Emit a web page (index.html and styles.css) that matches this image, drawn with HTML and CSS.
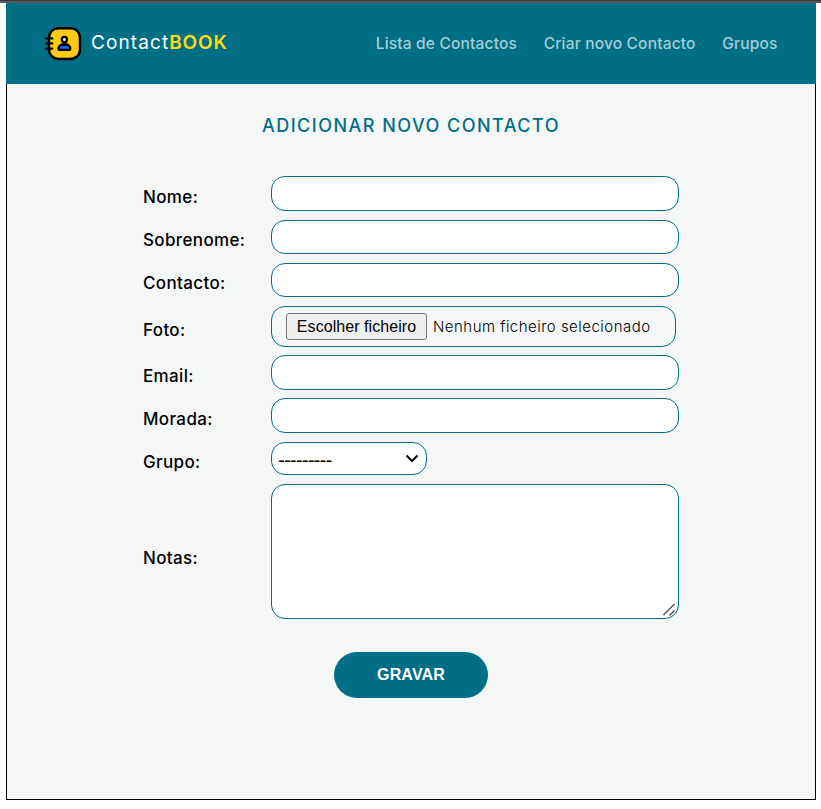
FILE: index.html
```html
<!DOCTYPE html>
<html lang="pt">
<head>
<meta charset="utf-8">
<title>ContactBOOK</title>
<link rel="stylesheet" href="styles.css">
</head>
<body>
<div class="page">
  <header class="header">
    <a class="brand">
      <svg class="logo" width="37" height="34" viewBox="0 0 37 34" fill="none" stroke="#000" stroke-linecap="round">
        <rect x="4" y="1.2" width="31" height="30.8" rx="9.500" fill="#ffca13" stroke-width="2.400"/>
        <path d="M1.400 11.400h5.800M1.400 16.400h5.800M1.400 21.600h5.800" stroke-width="2.400"/>
        <path d="M13.400 22c0-3.200 2.600-5.300 6-5.300s6 2.100 6 5.300c0 .8-.4 1-1 1h-10c-.6 0-1-.2-1-1z" fill="#000" stroke-width="2"/>
        <path d="M14.400 21.800c.2-1.400 1-2.200 2-2.800h6c1 .6 1.800 1.400 2 2.800z" fill="#0b6cf0" stroke="none"/>
        <circle cx="19.400" cy="12.500" r="2.600" fill="#fff" stroke-width="2.200"/>
      </svg>
      <span class="name">Contact<b>BOOK</b></span>
    </a>
    <nav class="nav"><a>Lista de Contactos</a><a>Criar novo Contacto</a><a>Grupos</a></nav>
  </header>
  <main class="main">
    <h1 class="title">ADICIONAR NOVO CONTACTO</h1>
    <form class="form">
      <label for="nome">Nome:</label><input class="field" id="nome" type="text">
      <label for="sobrenome" class="raised">Sobrenome:</label><input class="field short" id="sobrenome" type="text">
      <label for="contacto" class="raised">Contacto:</label><input class="field short" id="contacto" type="text">
      <label for="foto">Foto:</label>
      <div class="file"><button id="foto" type="button">Escolher ficheiro</button><span>Nenhum ficheiro selecionado</span></div>
      <label for="email">Email:</label><input class="field" id="email" type="email">
      <label for="morada">Morada:</label><input class="field" id="morada" type="text">
      <label for="grupo">Grupo:</label>
      <div class="select" id="grupo"><span>---------</span>
        <svg width="14" height="9" viewBox="0 0 14 9" fill="none" stroke="#000" stroke-width="2"><path d="M1.500 1.500 7 7l5.500-5.500"/></svg>
      </div>
      <label for="notas" class="notes">Notas:</label><div class="notes-box"><textarea class="field" id="notas"></textarea>
        <svg class="grip" width="14" height="14" viewBox="0 0 14 14" stroke="#555" stroke-width="1.500"><path d="M1.500 12 12.500 1M7.500 12.500l5-5"/></svg>
      </div>
    </form>
    <button class="save" type="button">GRAVAR</button>
  </main>
</div>
</body>
</html>
```
FILE: styles.css
```css
* { box-sizing: border-box; }
html { background: #fff; }
body {
  margin: 0;
  height: 809px;
  border-top: 3px solid #5c5858;
  font-family: Inter, "Liberation Sans", sans-serif;
  overflow: hidden;
}
body::before { content: ""; position: absolute; top: 0; left: 0; right: 0; height: 1px; background: #373535; }
.page { width: 810px; height: 797px; margin-left: 6px; display: flex; flex-direction: column; }
.header {
  height: 81px;
  background: #006e85;
  display: flex;
  align-items: center;
  justify-content: space-between;
  padding: 0 38.500px 0 39px;
}
.brand { display: flex; align-items: center; color: #fff; }
.logo { display: block; margin-right: 9px; }
.name { font-size: 19px; line-height: 24px; letter-spacing: 1.100px; white-space: nowrap; margin-top: -2px; }
.name b { color: #ffdb0a; font-weight: 600; letter-spacing: 0.800px; }
.nav { display: flex; gap: 26.600px; font-size: 15.500px; font-weight: 500; color: #a5cdd5; white-space: nowrap; letter-spacing: 0.180px; }
.main { flex: 1; background: #f5f7f7; border: 1px solid #000; border-top: 0; padding: 30px 0 0 136px; }
.title { margin: 0 0 0 -136px; height: 24px; text-align: center; color: #006e85; font-size: 18px; font-weight: 500; line-height: 24px; letter-spacing: 1.480px; }
.form {
  display: grid;
  grid-template-columns: 128px 408px;
  grid-template-rows: 44px 43px 43px 49px 43px 44px 42px 135px;
  margin-top: 38px;
}
label { align-self: center; font-size: 17px; font-weight: 500; line-height: 22px; letter-spacing: 0.360px; padding-bottom: 2px; color: #000; }
.raised { padding-bottom: 4px; }
.notes { padding: 12px 0 0; }
.field { display: block; width: 408px; height: 35px; margin: 0; border: 1px solid #006e85; border-radius: 14px; background: #fff; padding: 6px 14px; outline: 0; }
.short { height: 34px; }
.file { width: 405px; height: 41px; border: 1px solid #006e85; border-radius: 14px; padding: 0 14px; display: flex; align-items: center; gap: 6px; }
.file button { width: 141px; height: 27px; padding: 0; border: 1px solid #767676; border-radius: 3px; background: #efefef; color: #000; font: 16px "Liberation Sans", Arial, sans-serif; letter-spacing: 0.060px; white-space: nowrap; }
.file span { font-size: 15px; font-weight: 300; letter-spacing: 0.480px; white-space: nowrap; color: #000; }
.select { width: 156px; height: 33px; border: 1px solid #006e85; border-radius: 14px; background: #fff; display: flex; align-items: center; justify-content: space-between; padding: 0 7px 0 6px; font: 600 15px Inter, sans-serif; }
.select span { letter-spacing: -1.050px; padding-top: 3px; }
.notes-box { position: relative; height: 135px; }
textarea.field { height: 135px; resize: none; }
.grip { position: absolute; right: 3px; bottom: 2px; }
.save { display: block; width: 154px; height: 46px; margin: 33px 0 0 191px; padding: 0; border: 0; border-radius: 23px; background: #006e85; color: #fff; font: bold 16px "Liberation Sans", Arial, sans-serif; letter-spacing: 0.150px; }
```
